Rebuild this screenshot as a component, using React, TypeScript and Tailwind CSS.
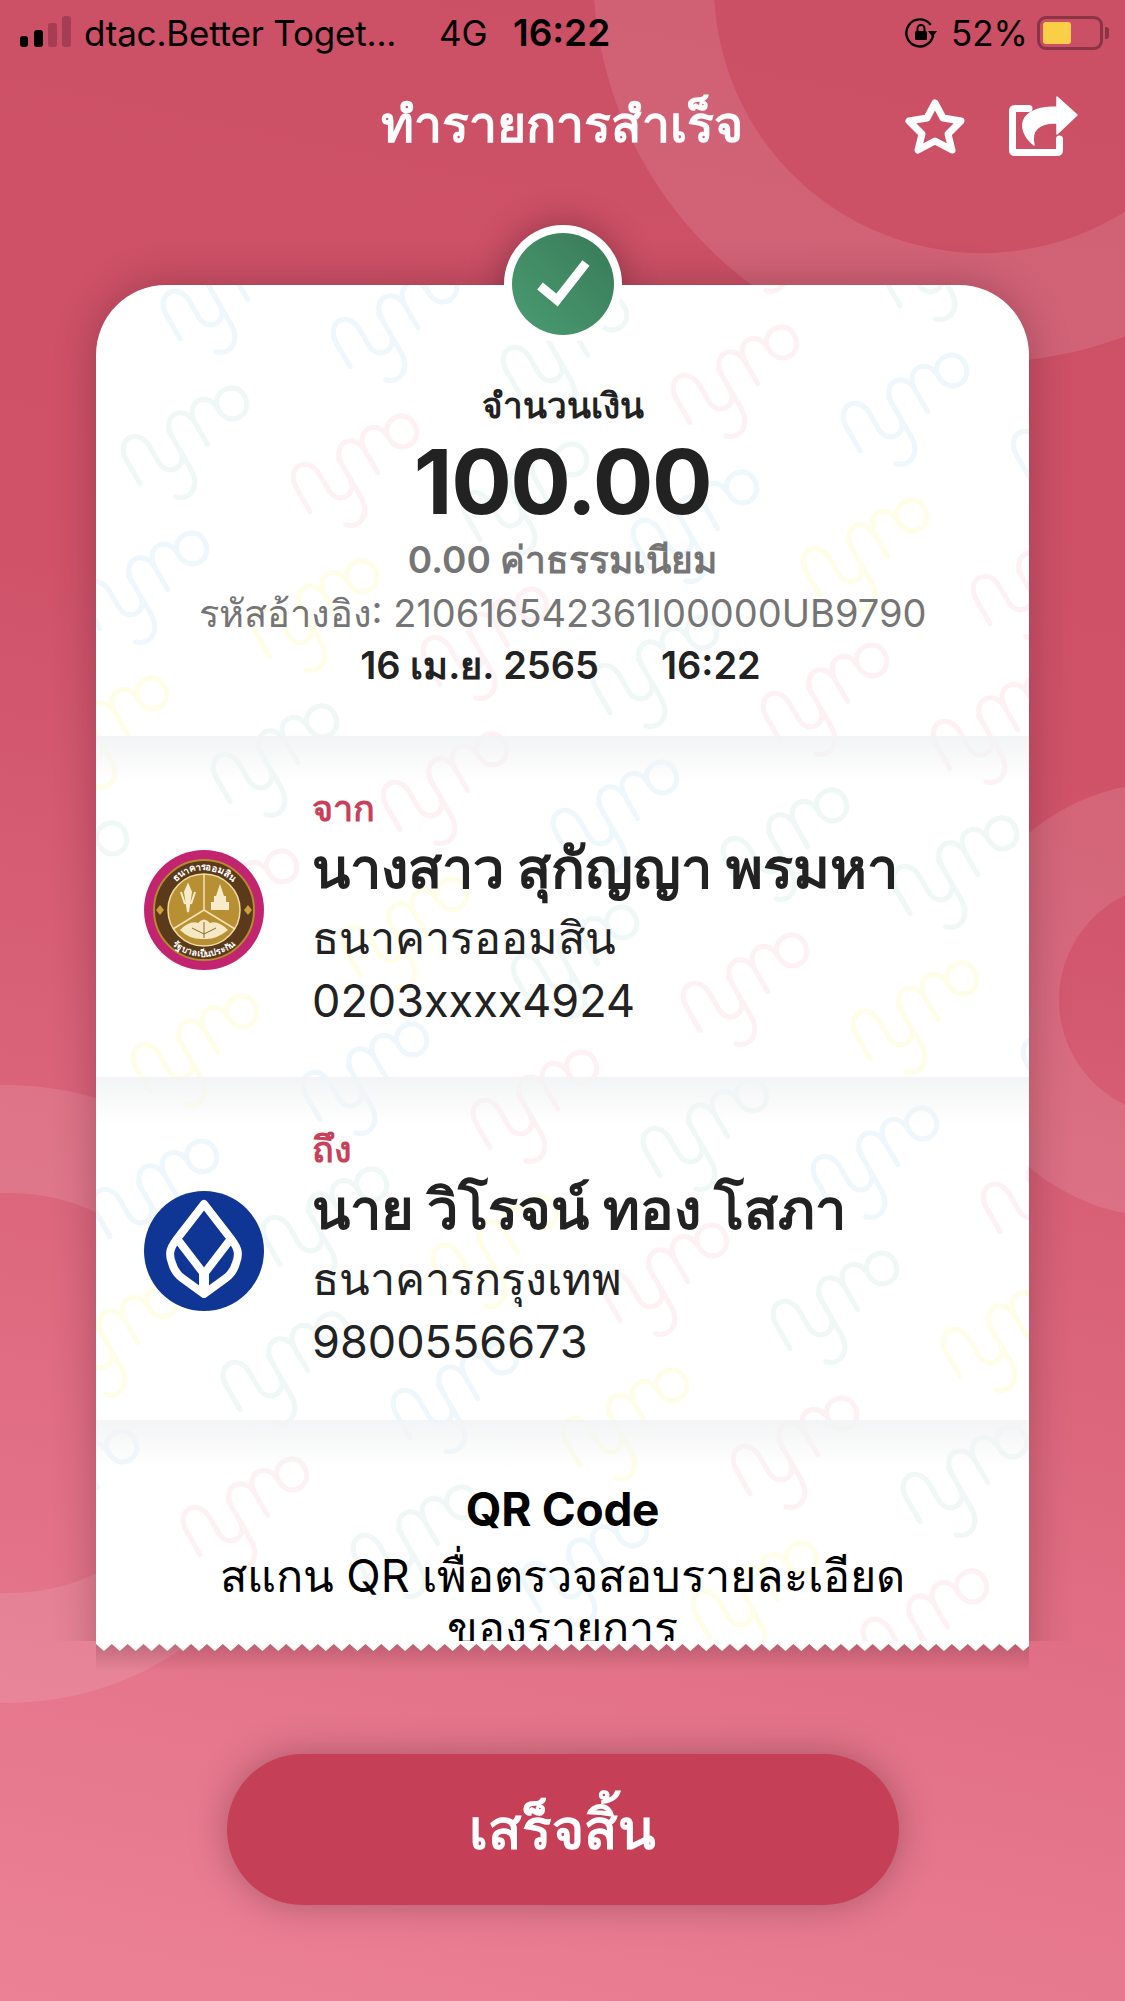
import React from "react";

const T = "#eff8f6";
const P = "#fdf1f3";
const B = "#eef7fc";
const Y = "#fefde8";
const markRows = [
  [T, P, T, P, P, P, T],
  [B, Y, B, B, T, P, B],
  [P, T, T, P, T, B, Y],
  [P, P, B, Y, P, T, P],
  [T, P, Y, T, P, B, T],
  [Y, B, T, P, Y, T, P],
  [B, P, T, Y, B, P, T],
  [T, Y, P, B, T, Y, P],
  [P, T, B, Y, T, B, Y],
  [Y, P, T, B, P, T, B],
];

const marks: { x: number; y: number; color: string }[] = [];
markRows.forEach((row, r) => {
  for (let c = -2; c < 9; c++) {
    marks.push({
      x: 56 + c * 170 - (r - 1) * 40,
      y: 5 + c * 28 + (r - 1) * 145,
      color: row[(c + 2) % row.length],
    });
  }
});

const Watermark = () => (
  <svg className="absolute top-0 left-0" width="933" height="1400" fill="none">
    <defs>
      <g id="mymo" strokeWidth="4.2" strokeLinecap="round" strokeLinejoin="round">
        <path d="M0 46 V24 C0 4 22 4 22 24 V38 C22 54 42 54 42 38 V20 V56 C42 74 28 78 20 70" />
        <path d="M42 26 C42 6 64 6 64 26 V46 M64 26 C64 6 86 6 86 26 C86 44 110 44 110 26 C110 10 86 10 86 26" />
      </g>
    </defs>
    {marks.map((m, i) => (
      <use key={i} href="#mymo" stroke={m.color} transform={`translate(${m.x} ${m.y}) rotate(-30) scale(1.22)`} />
    ))}
  </svg>
);

const BgDecor = () => (
  <svg className="absolute top-0 left-0" width="1125" height="2001">
    <g fill="#ffffff" fillOpacity="0.105" fillRule="evenodd">
      <path d="M985 -422 a392 392 0 1 0 0.01 0 Z M982 -283 a268 268 0 1 1 -0.01 0 Z" />
      <path d="M1169 782 a218 218 0 1 0 0.01 0 Z M1175 884 a116 116 0 1 1 -0.01 0 Z" />
      <path d="M7 1085 a309 309 0 1 0 0.01 0 Z M10 1193 a200 200 0 1 1 -0.01 0 Z" />
    </g>
  </svg>
);

const SignalBars = () => (
  <svg width="52" height="34" viewBox="0 0 52 34" className="shrink-0">
    <rect x="0" y="20" width="8" height="11" rx="3" fill="#000" />
    <rect x="14" y="14" width="9" height="17" rx="3" fill="#000" />
    <rect x="28" y="7" width="9" height="24" rx="3" fill="#a53d54" />
    <rect x="42" y="0" width="9" height="31" rx="3" fill="#a53d54" />
  </svg>
);

const RotationLock = () => (
  <svg width="32" height="32" viewBox="0 0 32 32" fill="none" className="shrink-0">
    <path d="M28 19 A13.5 13.5 0 1 1 25 7" stroke="#000" strokeWidth="2.4" strokeLinecap="round" />
    <path d="M23 14 h9 l-4.5 6 Z" fill="#000" />
    <rect x="10" y="14" width="12" height="9" rx="1.5" fill="#000" />
    <path d="M12.5 14 v-2.5 a3.5 3.5 0 0 1 7 0 V14" stroke="#000" strokeWidth="2" />
  </svg>
);

const Battery = () => (
  <div className="flex items-center gap-[2px]">
    <div className="w-[66px] h-[34px] rounded-[9px] border-[3px] border-[#8a3446] p-[3px]">
      <div className="w-[28px] h-[22px] rounded-[3px] bg-[#f9cf47]" />
    </div>
    <div className="w-[4px] h-[12px] rounded-r-[3px] bg-[#8a3446]" />
  </div>
);

const StarIcon = () => (
  <svg width="68" height="68" viewBox="0 0 68 68" fill="none" className="shrink-0">
    <path
      d="M33 10 L41 25 L59 28 L46 41 L50 57 L33 48 L16 57 L20 41 L7 28 L25 25 Z"
      stroke="#fff"
      strokeWidth="7"
      strokeLinejoin="round"
    />
  </svg>
);

const ShareIcon = () => (
  <svg width="80" height="70" viewBox="0 0 80 70" fill="none" className="shrink-0">
    <path
      d="M29 16.5 H15 Q12.5 16.5 12.5 19 V58 Q12.5 60.5 15 60.5 H57 Q59.5 60.5 59.5 58 V47"
      stroke="#fff"
      strokeWidth="7"
      strokeLinecap="round"
    />
    <path d="M57 5 L77 23 L57 42 V31 C40 30 30 38 34 53 C24 45 20 34 25 26 C31 17 45 15 57 15 Z" fill="#fff" stroke="#fff" strokeWidth="1.5" strokeLinejoin="round" />
  </svg>
);

const CheckBadge = () => (
  <div className="absolute left-1/2 -translate-x-1/2 top-[-60px] w-[118px] h-[118px] rounded-full bg-white p-[8px]">
    <div className="w-full h-full rounded-full bg-[linear-gradient(45deg,#4a9c72,#387a58)]">
      <svg width="102" height="102" viewBox="0 0 102 102" fill="none">
        <path d="M28 53 L45 67 L74 30" stroke="#fff" strokeWidth="9" />
      </svg>
    </div>
  </div>
);

const GsbLogo = () => (
  <svg width="120" height="120" viewBox="0 0 120 120" className="shrink-0">
    <defs>
      <path id="gsbTop" d="M20 60 A40 40 0 0 1 100 60" />
      <path id="gsbBottom" d="M13 60 A47 47 0 0 0 107 60" />
    </defs>
    <circle cx="60" cy="60" r="60" fill="#c3246f" />
    <circle cx="60" cy="60" r="50" fill="#5b3a1c" stroke="#b58b2e" strokeWidth="2" />
    <circle cx="60" cy="60" r="36" fill="#b98f33" stroke="#f0dca0" strokeWidth="1.5" />
    <path d="M60 24 V60 M60 60 L29 79 M60 60 L91 79" stroke="#f3e4b4" strokeWidth="1.5" fill="none" />
    <path d="M36 80 Q46 70 54 73 Q60 66 66 73 Q74 70 84 80 Q72 90 60 89 Q46 90 36 80 Z" fill="#f4e9c4" />
    <path d="M60 72 V88 M48 78 L60 84 M72 78 L60 84" stroke="#8a6a24" strokeWidth="1" fill="none" />
    <path d="M44 35 L47 42 L44 62 L41 42 Z M37 42 L41 54 M51 42 L47 54" stroke="#f6eccb" strokeWidth="2" fill="#f6eccb" />
    <path d="M76 34 L80 46 H72 Z M70 46 H82 V52 H70 Z M67 52 H85 V60 H67 Z" fill="#f6eccb" />
    <path d="M20 60 l-4 -5 -4 5 4 5 Z M108 60 l-4 -5 -4 5 4 5 Z" fill="#c9a03c" />
    <text fill="#fff" fontSize="9.5" fontWeight="700">
      <textPath href="#gsbTop" startOffset="50%" textAnchor="middle">ธนาคารออมสิน</textPath>
    </text>
    <text fill="#fff" fontSize="9" fontWeight="700">
      <textPath href="#gsbBottom" startOffset="50%" textAnchor="middle">รัฐบาลเป็นประกัน</textPath>
    </text>
  </svg>
);

const BblLogo = () => (
  <svg width="120" height="120" viewBox="0 0 120 120" fill="none" className="shrink-0">
    <circle cx="60" cy="60" r="60" fill="#103695" />
    <path
      d="M60 13 L36 44 C26 56 24 62 28 72 C30 80 34 84 38 87 L60 103 L82 87 C86 84 90 80 92 72 C96 62 94 56 84 44 Z"
      stroke="#fff"
      strokeWidth="8"
      strokeLinejoin="round"
    />
    <path d="M34 49 L60 83 L86 49" stroke="#fff" strokeWidth="8" />
    <path d="M60 83 V101" stroke="#fff" strokeWidth="10" />
  </svg>
);

const parties = [
  { label: "จาก", name: "นางสาว สุกัญญา พรมหา", bank: "ธนาคารออมสิน", account: "0203xxxx4924", logo: <GsbLogo />, height: "h-[341px]" },
  { label: "ถึง", name: "นาย วิโรจน์ ทอง โสภา", bank: "ธนาคารกรุงเทพ", account: "9800556673", logo: <BblLogo />, height: "h-[343px]" },
];

const sectionFade = "bg-[linear-gradient(#f3f4f5,rgba(255,255,255,0)_48px)]";

export default function App() {
  return (
    <div className="relative w-[1125px] h-[2001px] overflow-hidden bg-[linear-gradient(192deg,#cb4f65_0%,#cf5269_35%,#de6a80_68%,#ec8196_100%)] font-['Inter','Noto_Sans',sans-serif]">
      <BgDecor />

      <div className="relative">
        {/* status bar */}
        <div className="flex items-center h-[66px] pl-[20px] pr-[16px] text-[35px] text-black">
          <SignalBars />
          <span className="ml-[12px] w-[355px] whitespace-nowrap tracking-[-0.2px]">dtac.Better Toget...</span>
          <span className="w-[74px]">4G</span>
          <span className="text-[37px] font-semibold">16:22</span>
          <div className="ml-auto flex items-center">
            <RotationLock />
            <span className="ml-[14px] mr-[9px]">52%</span>
            <Battery />
          </div>
        </div>

        {/* header */}
        <div className="relative h-[120px] flex items-center justify-center pr-[2px] pb-[4px]">
          <h1 className="text-[50px] font-bold text-white">ทำรายการสำเร็จ</h1>
          <div className="absolute right-[45px] top-[26px] flex items-center gap-[30px]">
            <StarIcon />
            <ShareIcon />
          </div>
        </div>

        {/* receipt, cut off where the scroll area ends */}
        <div className="relative h-[1455px] overflow-hidden px-[96px] pt-[99px]">
          <div className="relative">
            {/* shadow of the badge sits under the card, only the top half shows */}
            <div className="absolute left-1/2 -translate-x-1/2 top-[-60px] w-[118px] h-[118px] rounded-full shadow-[0_0_34px_rgba(50,15,25,0.4)]" />
            <div className="relative h-[1500px] rounded-t-[70px] bg-white shadow-[0_0_42px_rgba(50,15,25,0.3)]">
              <div className="absolute inset-0 overflow-hidden rounded-t-[70px]">
                <Watermark />
              </div>
              <CheckBadge />

              <div className="relative">
                <div className="h-[451px] pt-[103px] text-center">
                  <p className="text-[35px] leading-[34px] font-semibold text-[#222]">จำนวนเงิน</p>
                  <p className="mt-[10px] text-[90px] leading-[100px] font-bold tracking-[-1.5px] text-[#222]">100.00</p>
                  <p className="text-[37px] leading-[56px] font-semibold text-[#757575]">0.00 ค่าธรรมเนียม</p>
                  <p className="text-[38px] leading-[50px] text-[#757575]">รหัสอ้างอิง: 210616542361I00000UB9790</p>
                  <div className="flex justify-center gap-[62px] pr-[4px] text-[38px] leading-[54px] font-semibold text-[#222]">
                    <span>16 เม.ย. 2565</span>
                    <span>16:22</span>
                  </div>
                </div>

                {parties.map((p) => (
                  <div key={p.label} className={`flex items-start pl-[48px] ${p.height} ${sectionFade}`}>
                    <div className="mt-[114px]">{p.logo}</div>
                    <div className="ml-[48px] pt-[57px]">
                      <p className="text-[36px] leading-[30px] font-semibold text-[#c9405a]">{p.label}</p>
                      <p className="mt-[15px] text-[56px] leading-[60px] font-bold text-[#222]">{p.name}</p>
                      <p className="mt-[15px] text-[45px] leading-[50px] text-[#222]">{p.bank}</p>
                      <p className="mt-[13px] text-[45px] leading-[50px] text-[#222]">{p.account}</p>
                    </div>
                  </div>
                ))}

                <div className={`pt-[64px] text-center ${sectionFade}`}>
                  <p className="text-[46px] leading-[50px] font-bold tracking-[-0.3px] text-black">QR Code</p>
                  <p className="mt-[16px] text-[45px] leading-[52px] text-black">สแกน QR เพื่อตรวจสอบรายละเอียด</p>
                  <p className="text-[45px] leading-[52px] text-black">ของรายการ</p>
                </div>
              </div>
            </div>
          </div>
        </div>

        {/* torn paper edge */}
        <div className="relative h-[30px] mx-[96px] bg-[linear-gradient(rgba(90,40,55,0.3),rgba(90,40,55,0))]">
          <svg className="absolute top-0 left-0" width="933" height="10">
            <rect width="933" height="3" fill="#fff" />
            {Array.from({ length: 59 }).map((_, i) => (
              <polygon key={i} points={`${i * 15.85},3 ${(i + 1) * 15.85},3 ${(i + 0.5) * 15.85},10`} fill="#fff" />
            ))}
          </svg>
        </div>

        <div className="mt-[83px] flex justify-center">
          <button className="w-[672px] h-[151px] rounded-[76px] bg-[#c53f56] text-[55px] font-bold text-white shadow-[0_0_36px_rgba(60,30,40,0.35)]">
            เสร็จสิ้น
          </button>
        </div>
      </div>
    </div>
  );
}
